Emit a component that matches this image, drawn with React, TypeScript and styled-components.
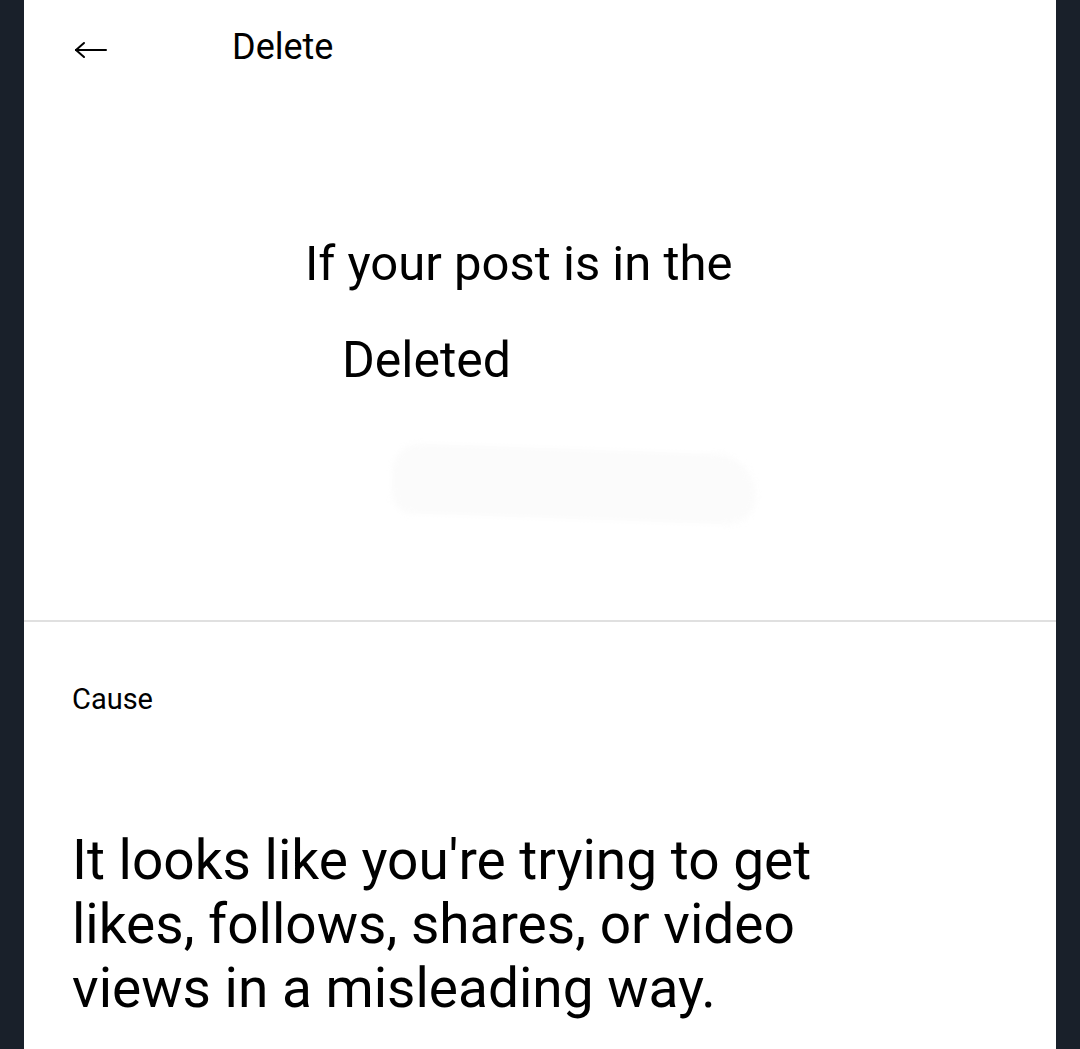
import React from 'react'
import styled, { createGlobalStyle } from 'styled-components'

const GlobalStyle = createGlobalStyle`
  html, body {
    margin: 0;
    padding: 0;
    background: #19202a;
  }
  body {
    font-family: Roboto, "Noto Sans", "Liberation Sans", sans-serif;
    color: #000;
  }
`

const Page = styled.main`
  width: 1032px;
  min-height: 1049px;
  margin: 0 auto;
  background: #fff;
  overflow: hidden;
`

const Header = styled.header`
  display: flex;
  align-items: center;
  height: 94px;
  padding-left: 50px;
`

const BackButton = styled.button`
  display: flex;
  align-items: center;
  border: 0;
  background: none;
  padding: 0;
  width: 158px;
  margin-top: 6px;
  color: #000;
`

const Title = styled.h1`
  margin: 0;
  font-size: 36px;
  font-weight: 400;
`

const Notice = styled.section`
  display: flex;
  flex-direction: column;
  align-items: flex-start;
  padding-top: 140px;
  padding-bottom: 96px;
`

const NoticeLine = styled.p<{ $indent: number; $size: number; $gap?: number }>`
  margin: ${p => p.$gap ?? 0}px 0 0 ${p => p.$indent}px;
  font-size: ${p => p.$size}px;
  line-height: 60px;
`

const Smudge = styled.div`
  margin: 59px 0 0 368px;
  width: 364px;
  height: 70px;
  border-radius: 40px 60px 40px 30px;
  background: #fbfbfb;
  filter: blur(3px);
  transform: rotate(2deg);
`

const Divider = styled.hr`
  margin: 5px 0 0;
  border: 0;
  height: 2px;
  background: #e0e0e0;
`

const CauseSection = styled.section`
  padding: 60px 48px 0 48px;
`

const Label = styled.div`
  font-size: 29px;
  line-height: 34px;
`

const Reason = styled.p`
  margin: 112px 0 0;
  max-width: 780px;
  font-size: 55px;
  line-height: 64px;
`

const ArrowIcon = () => (
  <svg width="34" height="20" viewBox="0 0 34 20" fill="none" stroke="currentColor" strokeWidth="2" strokeLinecap="round">
    <path d="M2 10H32" />
    <path d="M2 10L10 3" />
    <path d="M2 10L10 17" />
  </svg>
)

export default function App() {
  return (
    <>
      <GlobalStyle />
      <Page>
        <Header>
          <BackButton aria-label="Back">
            <ArrowIcon />
          </BackButton>
          <Title>Delete</Title>
        </Header>
        <Notice>
          <NoticeLine $indent={281} $size={49}>If your post is in the</NoticeLine>
          <NoticeLine $indent={318} $size={50} $gap={36}>Deleted</NoticeLine>
          <Smudge />
        </Notice>
        <Divider />
        <CauseSection>
          <Label>Cause</Label>
          <Reason>It looks like you're trying to get likes, follows, shares, or video views in a misleading way.</Reason>
        </CauseSection>
      </Page>
    </>
  )
}
